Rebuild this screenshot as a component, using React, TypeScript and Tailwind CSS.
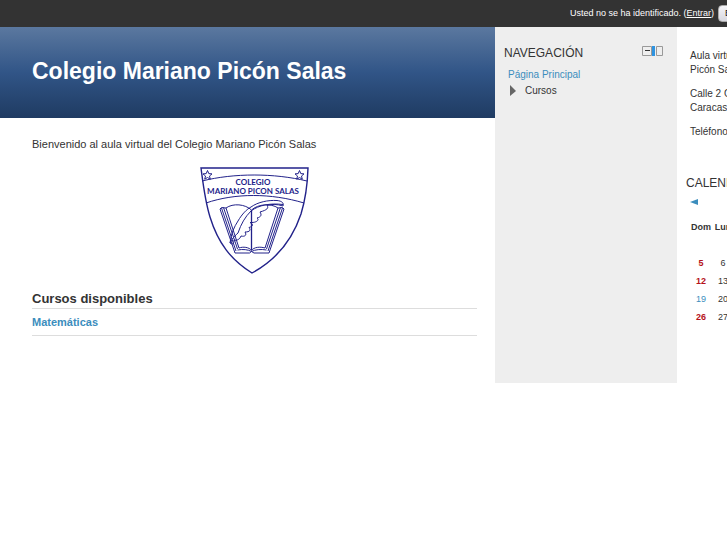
import React from "react";

const weekDays = ["Dom", "Lun", "Mar", "Mié", "Jue", "Vie", "Sáb"];
const weeks: (number | null)[][] = [
  [null, null, null, 1, 2, 3, 4],
  [5, 6, 7, 8, 9, 10, 11],
  [12, 13, 14, 15, 16, 17, 18],
  [19, 20, 21, 22, 23, 24, 25],
  [26, 27, 28, 29, 30, null, null],
];

function dayColour(day: number | null, column: number) {
  if (day === 19) return "text-[#3b8dbd]";
  return column === 0 ? "font-bold text-[#b5121b]" : "text-[#333333]";
}

function Crest() {
  return (
    <svg
      viewBox="0 0 110 108"
      className="h-[108px] w-[110px]"
      fill="none"
      stroke="#22228a"
      role="img"
      aria-label="Colegio Mariano Picon Salas"
    >
      <path
        strokeWidth="1.4"
        d="M1 2H108C107.500 18 105 35 101 48C92 75 76 94 52 107C31 94 18 77 10 51C5 35 3 17 1 2Z"
      />
      <path strokeWidth="1" d="M2 15C34 7 74 7 107 15M6 37C35 27 71 27 104 37" />
      <g strokeWidth="1">
        <path d="M7.500 4.500L8.800 7.600L12 7.900L9.500 10L10.300 13.200L7.500 11.500L4.700 13.200L5.500 10L3 7.900L6.200 7.600Z" />
        <path d="M99.500 4.500L100.800 7.600L104 7.900L101.500 10L102.300 13.200L99.500 11.500L96.700 13.200L97.500 10L95 7.900L98.200 7.600Z" />
      </g>
      <g fill="#22228a" stroke="none" textAnchor="middle" className="font-[Lato,'Open_Sans',sans-serif] text-[8px] font-bold">
        <text x="53" y="19">COLEGIO</text>
        <text x="53" y="28">MARIANO PICON SALAS</text>
      </g>
      <g strokeWidth="1">
        <path strokeWidth="1.300" d="M51.500 44V84" />
        <path d="M26 42C33 37 45 38 51.500 44C58 38 71 37 78 42" />
        <path d="M26 42L39 82M23.500 41.500L37.500 83M21.500 42L36 85M20 43L35 87M26 42L21.500 41.500L20 43" />
        <path d="M78 42L65 82M80.500 41.500L66.500 83M82.500 42L68 85M84 43L69 87M78 42L82.500 41.500L84 43" />
        <path d="M39 82C43 80.500 49 81 51.500 84.500C54 81 60 80.500 65 82" />
        <path d="M37.500 84C43 83 48 83.500 51.500 85.500C55 83.500 61 83 66.500 84M35 87H49.500L51.500 85.500L54 87H69" />
      </g>
      <path
        strokeWidth="1"
        d="M30 77C31 68 34 61 38 55C42 48 47 43 51 41C58 36 68 34 77 34.500C82 35 84 37 83 40C77 38 71 38 67 39.500C69 42 67 44 60 46C62 49 61 51 57 52C60 54 56 57 50 56.500C53 58 54 60 49 61.500C51 64 50 66 45 66C47 69 45 71 41 70C40 73 37 75 34 74C34 78 32 79 30 77C32 72 36 69 38 67C41 58 45 51 51 45C59 39 70 37 83 38.500"
      />
    </svg>
  );
}

export default function App() {
  return (
    <div className="min-h-screen w-full overflow-hidden bg-white font-['Liberation_Sans',Arial,sans-serif] text-[11px] text-[#333333]">
      <div className="w-full min-w-[859px]">
        <header className="flex h-[27px] items-center justify-end gap-1 bg-[#333333] pr-[11px] text-[9px] text-white">
          <p>
            Usted no se ha identificado. (<a href="#entrar" className="underline">Entrar</a>)
          </p>
          <select
            aria-label="Idioma"
            className="h-[17px] w-[130px] appearance-none rounded-sm border border-[#aaaaaa] bg-linear-to-b from-[#f4f4f8] to-[#d8d8e0] pl-[6px] text-[9px] text-[#222222]"
          >
            <option>Español - Internacional (es)</option>
          </select>
        </header>

        <div className="flex">
          <main className="min-w-0 flex-1">
            <div className="flex h-[91px] items-center bg-linear-to-b from-[#5b789f] via-[#315587] to-[#1f3b62] pr-4 pb-1 pl-8">
              <h1 className="text-[23px] leading-8 font-bold whitespace-nowrap text-white">Colegio Mariano Picón Salas</h1>
            </div>
            <div className="pt-[18px] pr-[18px] pl-8">
              <p className="leading-4">Bienvenido al aula virtual del Colegio Mariano Picón Salas</p>
              <div className="flex justify-center pt-[14px]">
                <Crest />
              </div>
              <h2 className="mt-4 border-b border-[#dddddd] text-[13px] leading-[18px] font-bold">Cursos disponibles</h2>
              <div className="border-b border-[#dddddd] py-[5px] leading-4 font-bold">
                <a href="#matematicas" className="text-[#3b8dbd]">Matemáticas</a>
              </div>
            </div>
          </main>

          <aside className="h-[356px] w-[182px] shrink-0 bg-[#eeeeee] pt-[18px] pr-[14px] pl-[9px]">
            <div className="flex items-start justify-between">
              <h2 className="text-[12px] leading-4">NAVEGACIÓN</h2>
              <button type="button" aria-label="Ocultar bloque Navegación">
                <svg viewBox="0 0 21 12" className="h-3 w-[21px]" fill="none">
                  <path d="M.5 1.500H9.500V10.500H.5ZM14.500 1.500H20.500V10.500H14.500Z" stroke="#999999" />
                  <path d="M3 5.500H8" stroke="#333333" />
                  <path d="M10 1H13V11H10Z" fill="#2e93e0" />
                </svg>
              </button>
            </div>
            <nav className="pt-[6px] pl-1 text-[10px] leading-4">
              <a href="#principal" className="text-[#3b8dbd]">Página Principal</a>
              <div className="flex items-center gap-2">
                <svg viewBox="0 0 9 12" className="h-3 w-[9px]" fill="#666666">
                  <path d="M2 0L8 6L2 11Z" />
                </svg>
                <span>Cursos</span>
              </div>
            </nav>
          </aside>

          <aside className="w-[182px] shrink-0 pt-[22px] pl-[9px] whitespace-nowrap">
            <div className="flex flex-col gap-[10px] pl-1 text-[10px] leading-[14px]">
              <p>Aula virtual Colegio Mariano<br />Picón Salas</p>
              <p>Calle 2 Casa<br />Caracas</p>
              <p>Teléfono</p>
            </div>
            <h2 className="pt-9 text-[12px] leading-4">CALENDARIO</h2>
            <a href="#anterior" aria-label="Mes anterior" className="mt-2 block pl-1">
              <svg viewBox="0 0 8 6" className="h-[6px] w-2" fill="#3b8dbd">
                <path d="M0 3L8 0V6Z" />
              </svg>
            </a>
            <table className="mt-[14px] ml-1 w-[154px] table-fixed text-center text-[9px]">
              <thead>
                <tr className="h-[18px]">
                  {weekDays.map((day) => (
                    <th key={day} scope="col" className="p-0">{day}</th>
                  ))}
                </tr>
              </thead>
              <tbody>
                {weeks.map((week, row) => (
                  <tr key={row} className="h-[18px]">
                    {week.map((day, column) => (
                      <td key={column} className={`p-0 ${dayColour(day, column)}`}>{day}</td>
                    ))}
                  </tr>
                ))}
              </tbody>
            </table>
          </aside>
        </div>
      </div>
    </div>
  );
}
